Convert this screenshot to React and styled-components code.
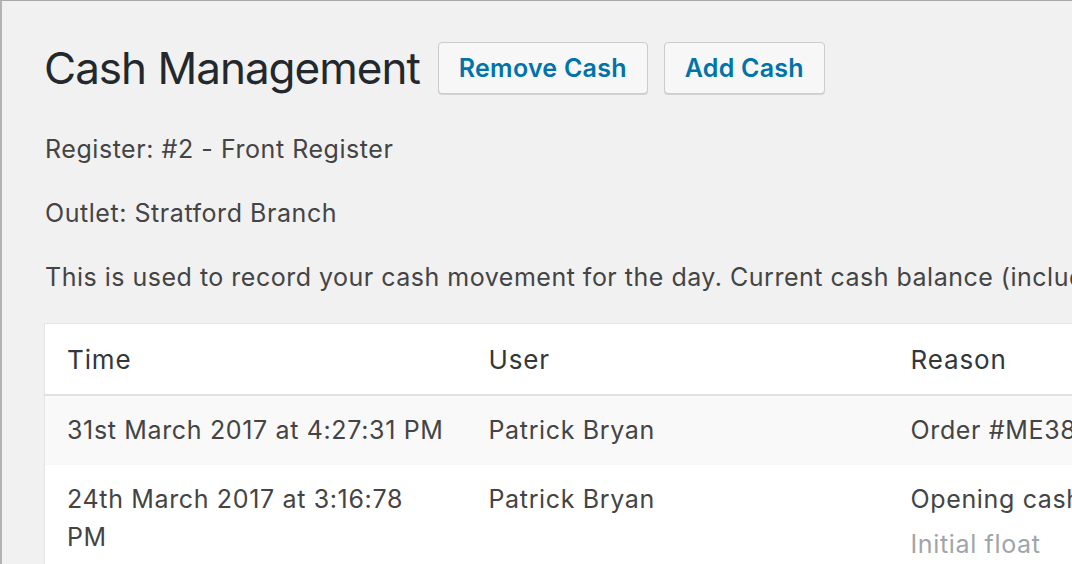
import React from "react";
import styled, { createGlobalStyle } from "styled-components";

const Global = createGlobalStyle`
  html, body {
    margin: 0;
    padding: 0;
    background: #f1f1f1;
    overflow: hidden;
  }
  body {
    font-family: Inter, "Liberation Sans", Arial, sans-serif;
    color: #444;
  }
`;

const Page = styled.div`
  width: 1700px;
  min-height: 600px;
  box-sizing: border-box;
  border-top: 1px solid #a9a9a9;
  border-left: 2px solid #b3b3b3;
  padding: 41px 0 0 42px;
`;

const HeaderRow = styled.div`
  display: flex;
  align-items: center;
  height: 52px;
`;

const Title = styled.h1`
  margin: 0 18px 0 0;
  font-size: 44px;
  line-height: 52px;
  font-weight: 400;
  letter-spacing: -1px;
  color: #23282d;
`;

const Button = styled.button`
  box-sizing: border-box;
  height: 52px;
  padding: 0 20px;
  margin-right: 16px;
  background: #f7f7f7;
  border: 1px solid #cccccc;
  border-radius: 4px;
  box-shadow: 0 1px 0 #d4d4d4;
  color: #0073aa;
  font-family: inherit;
  font-size: 25px;
  font-weight: 600;
  letter-spacing: 0.25px;
  cursor: pointer;
`;

const Info = styled.p`
  margin: ${(p) => (p.$first ? "36px" : "26px")} 0 0 1px;
  font-size: 25px;
  line-height: 38px;
  letter-spacing: ${(p) => (p.$tight ? "0.5px" : "0.55px")};
  white-space: nowrap;
  color: #444;
`;

const Table = styled.table`
  margin-top: 27px;
  border-collapse: collapse;
  table-layout: fixed;
  width: 1688px;
  background: #fff;
  border: 1px solid #e5e5e5;
  box-shadow: 0 1px 1px rgba(0, 0, 0, 0.04);
`;

const Th = styled.th`
  width: 422px;
  box-sizing: border-box;
  padding: 17px 22px 15px;
  text-align: left;
  font-size: 26px;
  line-height: 38px;
  font-weight: 400;
  letter-spacing: 0.85px;
  color: #32373c;
  border-bottom: 2px solid #e1e1e1;
`;

const Tr = styled.tr`
  background: ${(p) => (p.$alt ? "#f9f9f9" : "#fff")};
`;

const Td = styled.td`
  vertical-align: top;
  padding: 15px 22px 16px;
  font-size: 25px;
  line-height: 38px;
  letter-spacing: 0.65px;
  color: #444;
`;

const Line = styled.div`
  white-space: nowrap;
`;

const Note = styled.div`
  margin-top: 7px;
  color: #a0a5aa;
`;

const rows = [
  {
    time: ["31st March 2017 at 4:27:31 PM"],
    user: "Patrick Bryan",
    reason: "Order #ME3812",
    amount: "$24.00",
  },
  {
    time: ["24th March 2017 at 3:16:78", "PM"],
    user: "Patrick Bryan",
    reason: "Opening cash",
    note: "Initial float",
    amount: "$200.00",
  },
];

export default function App() {
  return (
    <>
      <Global />
      <Page>
        <HeaderRow>
          <Title>Cash Management</Title>
          <Button>Remove Cash</Button>
          <Button>Add Cash</Button>
        </HeaderRow>
        <Info $first>Register: #2 - Front Register</Info>
        <Info>Outlet: Stratford Branch</Info>
        <Info $tight>
          This is used to record your cash movement for the day. Current cash
          balance (including opening float) is $224.00.
        </Info>
        <Table>
          <thead>
            <tr>
              <Th>Time</Th>
              <Th>User</Th>
              <Th>Reason</Th>
              <Th>Amount</Th>
            </tr>
          </thead>
          <tbody>
            {rows.map((r, i) => (
              <Tr key={i} $alt={i % 2 === 0}>
                <Td>
                  {r.time.map((t, j) => (
                    <Line key={j}>{t}</Line>
                  ))}
                </Td>
                <Td>{r.user}</Td>
                <Td>
                  {r.reason}
                  {r.note && <Note>{r.note}</Note>}
                </Td>
                <Td>{r.amount}</Td>
              </Tr>
            ))}
          </tbody>
        </Table>
      </Page>
    </>
  );
}
